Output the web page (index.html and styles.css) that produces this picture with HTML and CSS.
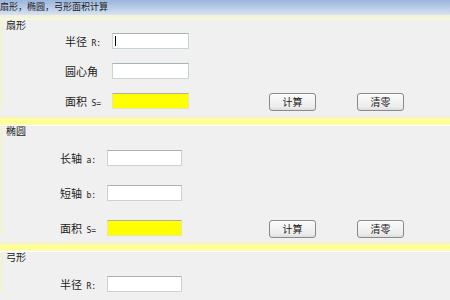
FILE: index.html
```html
<!DOCTYPE html>
<html>
<head>
  <title>扇形，椭圆，弓形面积计算</title>
  <link rel="stylesheet" href="styles.css">
</head>
<body>
  <div class="titlebar">扇形，椭圆，弓形面积计算</div>
  <div class="topband"></div>

  <div class="section sec-a">
    <div class="caption">扇形</div>
    <div class="rows rows-a">
      <div class="row">
        <label class="lbl">半径 <span class="var">R:</span></label>
        <div class="field"><span class="caret"></span></div>
      </div>
      <div class="row">
        <label class="lbl">圆心角</label>
        <div class="field"></div>
      </div>
      <div class="row">
        <label class="lbl">面积 <span class="var">S=</span></label>
        <div class="field result"></div>
        <button class="btn first">计算</button>
        <button class="btn">清零</button>
      </div>
    </div>
  </div>
  <div class="sep sep-a"></div>

  <div class="section sec-b">
    <div class="caption">椭圆</div>
    <div class="rows rows-b">
      <div class="row">
        <label class="lbl">长轴 <span class="var">a:</span></label>
        <div class="field"></div>
      </div>
      <div class="row">
        <label class="lbl">短轴 <span class="var">b:</span></label>
        <div class="field"></div>
      </div>
      <div class="row">
        <label class="lbl">面积 <span class="var">S=</span></label>
        <div class="field result"></div>
        <button class="btn first">计算</button>
        <button class="btn">清零</button>
      </div>
    </div>
  </div>
  <div class="sep sep-b"></div>

  <div class="section sec-c">
    <div class="caption">弓形</div>
    <div class="rows rows-b">
      <div class="row">
        <label class="lbl">半径 <span class="var">R:</span></label>
        <div class="field"></div>
      </div>
    </div>
  </div>
</body>
</html>
```

FILE: styles.css
```css
body {
  margin: 0;
  background-color: #f0f0f0;
  font-family: "Noto Sans CJK SC", "DejaVu Sans", sans-serif;
  font-size: 11px;
  color: #222;
  overflow: hidden;
}

.titlebar {
  height: 15px;
  line-height: 14px;
  font-size: 9px;
  color: #1c1c1c;
  background: linear-gradient(#9bb5dc, #c4d4ea 70%, #d9e4f1);
}

.topband {
  height: 5px;
  background: linear-gradient(#f2f2d8, #f7f7e6);
}

.section {
  border-left: 3px solid #f2f2d6;
}

.caption {
  height: 10px;
  line-height: 10px;
  font-size: 10px;
  padding-left: 3px;
  color: #1c1c1c;
}

.rows {
  display: flex;
  flex-direction: column;
}

.rows-a {
  margin-top: 3px;
  gap: 14px;
  padding-left: 62px;
  --lbl: 47px;
  --fw: 77px;
  --bgap: 80px;
}

.rows-b {
  margin-top: 14px;
  gap: 19px;
  padding-left: 57px;
  --lbl: 47px;
  --fw: 75px;
  --bgap: 87px;
}

.row {
  display: flex;
  align-items: flex-start;
  height: 16px;
}

.lbl {
  width: var(--lbl);
  line-height: 16px;
  font-size: 11px;
  white-space: nowrap;
}

.var {
  font-family: "DejaVu Sans Mono", monospace;
  font-size: 8px;
  margin-left: 2px;
}

.field {
  box-sizing: border-box;
  width: var(--fw);
  height: 16px;
  background-color: #fff;
  border: 1px solid #c9d2d6;
  border-top-color: #a9b4b8;
  display: flex;
  align-items: center;
  padding-left: 2px;
}

.field.result {
  background-color: #ffff00;
  border-color: #e6e6a8;
  border-top-color: #b0b0a0;
}

.caret {
  width: 1px;
  height: 10px;
  background-color: #000;
}

.btn {
  box-sizing: border-box;
  width: 47px;
  height: 18px;
  padding: 0;
  margin-left: 41px;
  font-family: "Noto Sans CJK SC", sans-serif;
  font-size: 10px;
  line-height: 14px;
  color: #222;
  background: linear-gradient(#fbfbfb, #ececec 80%, #dcdcdc);
  border: 1px solid #8a8a8a;
  border-radius: 3px;
}

.btn.first {
  margin-left: var(--bgap);
}

.sep {
  height: 10px;
  background: linear-gradient(#ececdc 0, #f6f6c8 2px, #ffff98 3px, #ffff98 8px, #f8f8dc 9px, #ffffff 9px);
}

.sep-a {
  margin-top: 7px;
}

.sep-b {
  margin-top: 6px;
}
```
